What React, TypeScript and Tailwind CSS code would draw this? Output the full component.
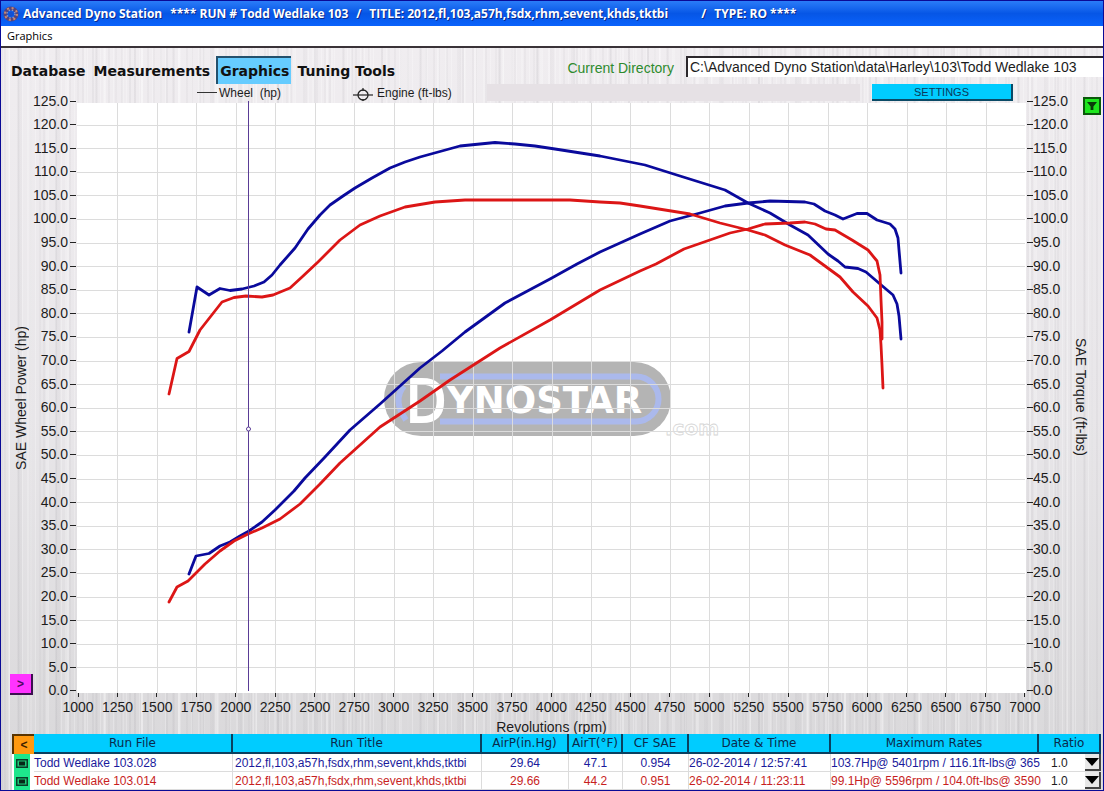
import React from "react";

type Run = {
  file: string;
  title: string;
  airP: string;
  airT: string;
  cf: string;
  date: string;
  max: string;
  ratio: string;
  color: string;
};

const RUNS: Run[] = [
  {
    file: "Todd Wedlake 103.028",
    title: "2012,fl,103,a57h,fsdx,rhm,sevent,khds,tktbi",
    airP: "29.64",
    airT: "47.1",
    cf: "0.954",
    date: "26-02-2014 / 12:57:41",
    max: "103.7Hp@ 5401rpm / 116.1ft-lbs@ 365",
    ratio: "1.0",
    color: "text-[#1a1a9c]",
  },
  {
    file: "Todd Wedlake 103.014",
    title: "2012,fl,103,a57h,fsdx,rhm,sevent,khds,tktbi",
    airP: "29.66",
    airT: "44.2",
    cf: "0.951",
    date: "26-02-2014 / 11:23:11",
    max: "99.1Hp@ 5596rpm / 104.0ft-lbs@ 3590",
    ratio: "1.0",
    color: "text-[#c81e1e]",
  },
];

const HEADERS = [
  "Run File",
  "Run Title",
  "AirP(in.Hg)",
  "AirT(°F)",
  "CF SAE",
  "Date & Time",
  "Maximum Rates",
  "Ratio",
];

const Y_VALUES = Array.from({ length: 26 }, (_, i) => (125 - i * 5).toFixed(1));
const X_VALUES = Array.from({ length: 25 }, (_, i) => 1000 + i * 250);

const BLUE_TORQUE =
  "189,332 197,287 209,295 220,288.5 230,290.5 242,289 254,286 264,282 272,275 280,265 295,248 308,229 320,215 330,205 343,196 355,188 372,178 390,168 405,162 420,157 460,146 480,144 495,142.5 515,144 535,146 555,149 600,156 645,165 680,176 725,190 748,203 770,213 790,225 808,235 828,254 838,261 845,267 858,268.5 866,272 880,284 893,295 897,304 899,316 901,339";
const RED_TORQUE =
  "169,394 177,358.5 189,351.5 200,330 211,316 222,302 234,297.5 246,296 262,297 273,295 290,288 302,277 318,262 340,240 360,225 380,216 405,207 435,202 465,200 570,200 600,202 620,203 640,206 690,214 720,223 748,230 765,235 785,245 810,255 825,266 840,277 853,292 868,306 877,318 880,330 881,345 882,365 883,388";
const BLUE_POWER =
  "189,574 196,556 209,553.5 220,546 230,542 240,536 249,531 262,522 275,510 294,491 305,478 325,457 350,430 380,404 420,368 442,351 465,332 505,303 550,279 577,264 600,252 640,234 670,221 700,213 725,206 748,203 770,201 805,202 814,204 825,211 835,215 843,219 857,213.5 867,213.5 877,220 890,224 895,229 898,238 899,250 901,273";
const RED_POWER =
  "169,602 177,587 188,581 205,564 220,551 234,541 248,534 262,528 280,519 300,504 320,484 340,463 380,427 420,401 450,380 500,348 550,320 600,290 640,271 656,264 684,249 730,233 748,229 765,224 790,223 805,222 815,224 826,229 835,230 852,240 868,250 877,261 880,275 881,300 882,322 882,339";

function MetalTexture() {
  return (
    <div aria-hidden="true" className="absolute inset-0 bg-linear-to-b from-[#f0edf0] via-[#e8e6e9] to-[#d8d7d9]">
      <div className="h-full bg-[repeating-linear-gradient(90deg,transparent_0_3px,rgba(110,105,115,0.05)_3px_5px,transparent_5px_8px,rgba(255,255,255,0.25)_8px_9px,transparent_9px_13px),repeating-linear-gradient(90deg,rgba(100,95,105,0.04)_0_2px,transparent_2px_7px,rgba(255,255,255,0.2)_7px_9px,transparent_9px_19px),repeating-linear-gradient(90deg,transparent_0_17px,rgba(90,90,100,0.06)_17px_19px,transparent_19px_29px,rgba(255,255,255,0.3)_29px_31px,transparent_31px_37px)]" />
    </div>
  );
}

function AppIcon() {
  return (
    <svg viewBox="0 0 16 16" className="h-4 w-4" aria-hidden="true">
      <circle cx="8" cy="8" r="5.6" fill="none" stroke="#54437c" strokeWidth="4" />
      <circle cx="8" cy="8" r="6" fill="none" stroke="#c98a72" strokeWidth="2" strokeDasharray="2 2.7" />
      <circle cx="8" cy="8" r="4" fill="none" stroke="#8f9cc8" strokeWidth="1.4" strokeDasharray="1.4 1.8" />
      <circle cx="8" cy="8" r="2.2" fill="#1550d0" />
    </svg>
  );
}

function Watermark() {
  return (
    <svg viewBox="0 0 336 78" className="h-[78px] w-[336px]" role="img" aria-label="Dynostar.com">
      <rect x="0" y="0" width="287" height="74" rx="37" fill="#b4b4b4" />
      <path d="M56 14.5H252A21.5 21.5 0 0 1 252 59.5H56" fill="none" stroke="#abb9ec" strokeWidth="6" />
      <path d="M20 24Q8 38 22 58" fill="none" stroke="#abb9ec" strokeWidth="6" />
      <text x="22" y="60" fill="#fff" fontFamily="DejaVu Sans Condensed, DejaVu Sans, sans-serif" fontSize="58" fontWeight="400" stroke="#fff" strokeWidth="2">
        D
      </text>
      <text x="63" y="51" fill="#fff" fontFamily="DejaVu Sans, sans-serif" fontSize="37" fontWeight="700">
        YNOSTAR
      </text>
      <text x="281" y="73" fill="#fff" stroke="#d6d6d6" strokeWidth="0.8" fontFamily="DejaVu Sans, sans-serif" fontSize="20" fontWeight="700">
        .com
      </text>
    </svg>
  );
}

function Curve({ points, color }: { points: string; color: string }) {
  return (
    <polyline
      points={points}
      fill="none"
      stroke={color}
      strokeWidth="2.8"
      strokeLinejoin="round"
      strokeLinecap="round"
      vectorEffect="non-scaling-stroke"
    />
  );
}

function Plot() {
  return (
    <div className="relative">
      <div className="absolute -inset-x-px top-0.5 -bottom-0.5 grid place-items-center bg-white pt-1.5">
        <Watermark />
      </div>
      <svg viewBox="78 101 947 590" preserveAspectRatio="none" className="absolute inset-0 h-full w-full overflow-visible" role="img" aria-label="Wheel power and torque against engine speed">
        {X_VALUES.slice(1, -1).map((v, i) => {
          const x = Math.round(78 + (i + 1) * 39.46) + 0.5;
          return <line key={v} x1={x} x2={x} y1="103" y2="693" stroke="#dcdcdc" vectorEffect="non-scaling-stroke" />;
        })}
        {Y_VALUES.slice(1, -1).map((v, i) => {
          const y = Math.round(101 + (i + 1) * 23.6) + 0.5;
          return <line key={v} x1="77" x2="1025" y1={y} y2={y} stroke="#dcdcdc" vectorEffect="non-scaling-stroke" />;
        })}
        <Curve points={BLUE_TORQUE} color="#0a0a9c" />
        <Curve points={BLUE_POWER} color="#0a0a9c" />
        <Curve points={RED_TORQUE} color="#dc1616" />
        <Curve points={RED_POWER} color="#dc1616" />
        <line x1="248.5" x2="248.5" y1="101" y2="691" stroke="#5a3c96" vectorEffect="non-scaling-stroke" />
        <circle cx="248.5" cy="429" r="2" fill="#fff" stroke="#5a3c96" />
      </svg>
    </div>
  );
}

export default function App() {
  return (
    <div className="flex min-h-screen flex-col border border-[#0a0a96] bg-white font-['Liberation_Sans',Arial,sans-serif] text-[#1c1c1c]">
      <header className="flex h-[25px] shrink-0 items-center gap-1 bg-linear-to-b from-[#2a7cf8] via-[#0656e6] to-[#0a62fb] pl-0.5 font-['Open_Sans',sans-serif] text-[12px] font-bold text-white">
        <AppIcon />
        <h1 className="flex gap-2 whitespace-nowrap [text-shadow:1px_1px_0_#0a2a8c]">
          <span>Advanced Dyno Station</span>
          <span>**** RUN # Todd Wedlake 103</span>
          <span>/</span>
          <span className="min-w-[324px]">TITLE: 2012,fl,103,a57h,fsdx,rhm,sevent,khds,tktbi</span>
          <span>/</span>
          <span>TYPE: RO ****</span>
        </h1>
      </header>

      <nav className="flex h-[22px] shrink-0 items-center border-b-2 border-[#3a3338] bg-white px-1.5">
        <button className="font-['Open_Sans',sans-serif] text-[11px] leading-4 text-black">Graphics</button>
      </nav>

      <main className="relative flex flex-1 flex-col">
        <MetalTexture />
        <div className="relative flex h-9 shrink-0 items-start pt-2">
          <div className="flex gap-1 pl-2 font-['DejaVu_Sans',sans-serif] text-[14px] font-bold text-[#111]">
            <button className="h-7 px-0.5 pt-0.5">Database</button>
            <button className="h-7 px-0.5 pt-0.5">Measurements</button>
            <button className="h-7 border-t-2 border-l-2 border-[#24506c] bg-[#66ccff] px-0.5">Graphics</button>
            <button className="h-7 px-0.5 pt-0.5">Tuning Tools</button>
          </div>
          <label htmlFor="directory" className="ml-auto pr-3 text-[14px] leading-6 text-[#2e8b2e]">
            Current Directory
          </label>
          <input
            id="directory"
            readOnly
            defaultValue="C:\Advanced Dyno Station\data\Harley\103\Todd Wedlake 103"
            className="h-[21px] w-[417px] border-t-2 border-l-2 border-[#2c282c] bg-white px-0.5 text-[14px] outline-none"
          />
        </div>

        <div className="relative flex h-[17px] shrink-0 items-center pl-[196px] text-[12px]">
          <span className="w-5 border-t border-[#333]" />
          <span className="pl-0.5 whitespace-pre">{"Wheel  (hp)"}</span>
          <svg viewBox="0 0 20 16" className="ml-[72px] h-4 w-5" aria-hidden="true">
            <path d="M0 10H20" stroke="#222" strokeWidth="1.2" />
            <circle cx="10" cy="10" r="5" fill="none" stroke="#222" strokeWidth="1.3" />
            <path d="M10 3V6M10 14V16" stroke="#222" strokeWidth="1.2" />
          </svg>
          <span className="w-[114px] pl-1">Engine (ft-lbs)</span>
          <div className="h-full flex-1 bg-[#e6e1e5]" />
          <button className="mr-[90px] ml-3 h-[17px] w-[141px] border-r-2 border-b-2 border-[#0a4a66] bg-[#00ccff] text-[11px] leading-4 text-[#0a3a5c]">
            SETTINGS
          </button>
        </div>

        <section className="relative grid flex-1 grid-cols-[77px_minmax(0,1fr)_78px] grid-rows-[minmax(520px,1fr)_43px] text-[14px]">
          <div className="flex">
            <div className="-mb-1 flex w-[34px] flex-col items-end">
              <div className="flex flex-1 items-center pt-5">
                <span className="mr-0.5 rotate-180 leading-5 [writing-mode:vertical-rl]">SAE Wheel Power (hp)</span>
              </div>
              <button aria-label="Next" className="h-[21px] w-[23px] border-r-2 border-b-2 border-[#3c1050] bg-[#ff33ff] text-[12px] leading-4 font-bold text-[#4a0a60]">
                &gt;
              </button>
            </div>
            <ul className="flex flex-1 flex-col justify-between">
              {Y_VALUES.map((v) => (
                <li key={v} className="flex h-0 items-center justify-end gap-0.5 pr-0.5">
                  {v}
                  <span className="w-1.5 border-t border-[#222]" />
                </li>
              ))}
            </ul>
          </div>

          <Plot />

          <div className="flex justify-between pl-0.5">
            <ul className="flex flex-col justify-between">
              {Y_VALUES.map((v) => (
                <li key={v} className="flex h-0 items-center">
                  <span className="w-1.5 border-t border-[#222]" />
                  {v}
                </li>
              ))}
            </ul>
            <div className="-mt-1 flex flex-col items-end pr-0.5">
              <button aria-label="Show options" className="grid h-[18px] w-[18px] place-items-center border-2 border-[#0a5a0a] bg-[#1ee61e]">
                <svg viewBox="0 0 10 8" className="h-2 w-2.5" aria-hidden="true">
                  <path d="M0 0H10L6.4 4.4V8H3.6V4.4Z" fill="#0a3c0a" />
                </svg>
              </button>
              <div className="flex flex-1 items-center pr-2.5 pb-3">
                <span className="leading-5 [writing-mode:vertical-rl]">SAE Torque (ft-lbs)</span>
              </div>
            </div>
          </div>

          <div className="col-start-2 flex flex-col">
            <ul className="flex justify-between leading-4">
              {X_VALUES.map((v) => (
                <li key={v} className="flex w-0 flex-col items-center gap-0.5">
                  <span className="mt-0.5 h-1 border-l border-[#222]" />
                  {v}
                </li>
              ))}
            </ul>
            <div className="pt-1 text-center leading-4">Revolutions (rpm)</div>
          </div>
        </section>

        <div className="relative shrink-0 pr-0.5 pl-[11px]">
          <table className="w-full table-fixed border-separate border-spacing-0 bg-white text-left text-[12px]">
            <colgroup>
              <col className="w-[22px]" />
              <col className="w-[199px]" />
              <col />
              <col className="w-[87px]" />
              <col className="w-[54px]" />
              <col className="w-[66px]" />
              <col className="w-[142px]" />
              <col className="w-[208px]" />
              <col className="w-[62px]" />
            </colgroup>
            <thead>
              <tr className="h-5">
                <th className="p-0">
                  <button aria-label="Previous" className="block h-5 w-full border-t-2 border-l-2 border-[#5a3400] bg-[#ff9911] text-[12px] leading-4 font-bold text-[#3c1e00]">
                    &lt;
                  </button>
                </th>
                {HEADERS.map((h) => (
                  <th
                    key={h}
                    className="border-r-2 border-b-2 border-[#0a4060] bg-[#00ccff] p-0 text-center font-['DejaVu_Sans',sans-serif] text-[12px] leading-4 font-normal whitespace-nowrap text-[#0a2a4c]"
                  >
                    {h}
                  </th>
                ))}
              </tr>
            </thead>
            <tbody>
              {RUNS.map((r) => (
                <tr key={r.file} className={"h-[18px] leading-4 whitespace-nowrap " + r.color}>
                  <td className="p-0 pl-0.5">
                    <div className="grid h-[18px] w-4 place-items-center bg-[#1ee68c]">
                      <svg viewBox="0 0 12 9" className="h-[9px] w-3" aria-hidden="true">
                        <rect x="0.75" y="0.75" width="10.5" height="7.5" fill="#1ec878" stroke="#0a3c28" strokeWidth="1.5" />
                        <rect x="3" y="2.5" width="6" height="4" fill="#062818" />
                      </svg>
                    </div>
                  </td>
                  <td className="border-r border-b border-[#dcdcdc] p-0">{r.file}</td>
                  <td className="border-r border-b border-[#dcdcdc] p-0 pl-0.5">{r.title}</td>
                  <td className="border-r border-b border-[#dcdcdc] p-0 text-center">{r.airP}</td>
                  <td className="border-r border-b border-[#dcdcdc] p-0 text-center">{r.airT}</td>
                  <td className="border-r border-b border-[#dcdcdc] p-0 text-center">{r.cf}</td>
                  <td className="border-r border-b border-[#dcdcdc] p-0">{r.date}</td>
                  <td className="border-b border-[#dcdcdc] p-0">{r.max}</td>
                  <td className="border-b border-[#dcdcdc] p-0">
                    <div className="relative h-[17px]">
                      <select aria-label={"Ratio for " + r.file} className="h-full w-full appearance-none bg-transparent pl-3 text-[#1c1c1c] outline-none">
                        <option>{r.ratio}</option>
                      </select>
                      <span className="pointer-events-none absolute inset-y-0 right-0 grid w-4 place-items-center border-r-2 border-b-2 border-[#444] bg-[#e8e8e8]">
                        <svg viewBox="0 0 14 8" className="h-2 w-3.5" aria-hidden="true">
                          <path d="M0 0H14L7 8Z" fill="#000" />
                        </svg>
                      </span>
                    </div>
                  </td>
                </tr>
              ))}
            </tbody>
          </table>
        </div>
      </main>
    </div>
  );
}
